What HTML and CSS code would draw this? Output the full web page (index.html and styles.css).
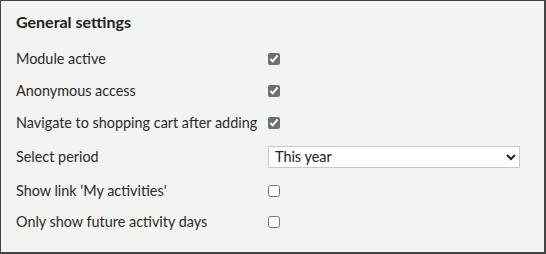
FILE: index.html
```html
<!DOCTYPE html>
<html lang="en">
<head>
  <meta charset="UTF-8" />
  <title>General settings</title>
  <link rel="stylesheet" href="styles.css">
</head>
<body>

  <div class="panel">
    <h2 class="panel-title">General settings</h2>

    <div class="row">
      <label class="row-label" for="moduleActive">Module active</label>
      <div class="row-control"><input type="checkbox" id="moduleActive" checked /></div>
    </div>
    <div class="row">
      <label class="row-label" for="anonymous">Anonymous access</label>
      <div class="row-control"><input type="checkbox" id="anonymous" checked /></div>
    </div>
    <div class="row row-short">
      <label class="row-label" for="gotoCart">Navigate to shopping cart after adding</label>
      <div class="row-control"><input type="checkbox" id="gotoCart" checked /></div>
    </div>
    <div class="row row-select">
      <label class="row-label" for="period">Select period</label>
      <div class="row-control">
        <select id="period">
          <option>This year</option>
          <option>Last year</option>
          <option>All</option>
        </select>
      </div>
    </div>
    <div class="row row-short">
      <label class="row-label" for="myActivities">Show link 'My activities'</label>
      <div class="row-control"><input type="checkbox" id="myActivities" /></div>
    </div>
    <div class="row row-short">
      <label class="row-label" for="futureOnly">Only show future activity days</label>
      <div class="row-control"><input type="checkbox" id="futureOnly" /></div>
    </div>
  </div>

</body>
</html>
```

FILE: styles.css
```css
html, body {
  margin: 0;
  padding: 0;
}
body {
  font-family: Lato, "Open Sans", sans-serif;
  color: #2b2b2b;
}
.panel {
  box-sizing: border-box;
  width: 546px;
  height: 254px;
  background: #f3f3f2;
  border: 1px solid #444;
  border-right-width: 2px;
  border-bottom-width: 2px;
  padding: 9px 0 0 15px;
}
.panel-title {
  margin: 0 0 9px;
  font-size: 16px;
  line-height: 24px;
  font-weight: bold;
  color: #222;
}
.row {
  display: flex;
  align-items: center;
  height: 32px;
  font-size: 14.4px;
}
.row-short {
  height: 31px;
}
.row-select {
  height: 37px;
}
.row-label {
  width: 252px;
  line-height: 20px;
}
.row-control {
  display: flex;
  align-items: center;
}
.row-control input[type="checkbox"] {
  margin: 0;
  width: 12px;
  height: 12px;
  accent-color: #6f6f6f;
}
.row-control select {
  width: 252px;
  height: 22px;
  font-family: Lato, sans-serif;
  font-size: 14.4px;
  color: #222;
  background: #fff;
  border: 1px solid #c8c8c8;
  border-radius: 0;
  padding: 0 2px;
}
```
